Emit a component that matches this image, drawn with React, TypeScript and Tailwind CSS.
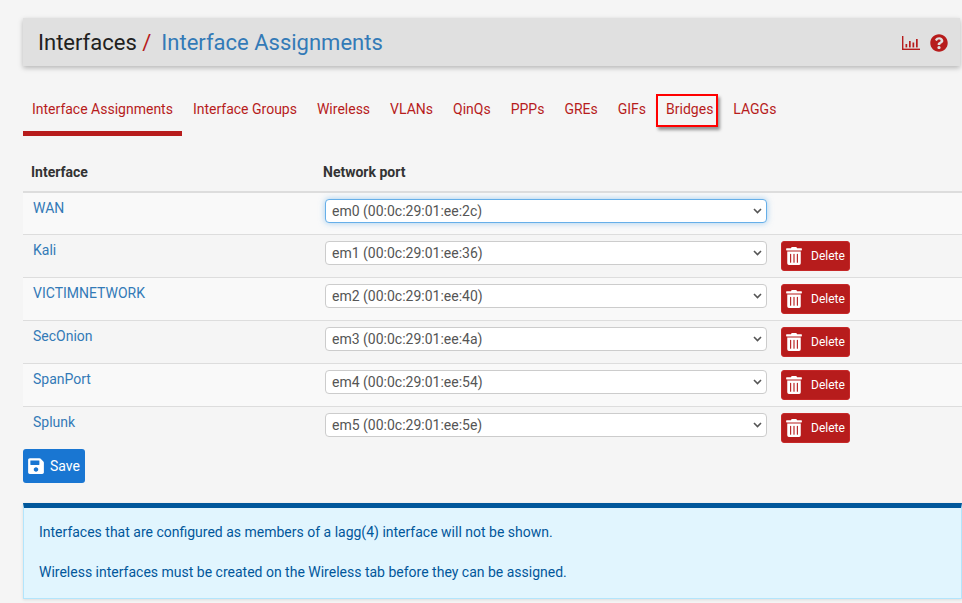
import { FaQuestionCircle, FaSave, FaTrashAlt } from "react-icons/fa"

const tabs = [
  "Interface Assignments",
  "Interface Groups",
  "Wireless",
  "VLANs",
  "QinQs",
  "PPPs",
  "GREs",
  "GIFs",
  "Bridges",
  "LAGGs",
]

const rows = [
  { name: "WAN", port: "em0 (00:0c:29:01:ee:2c)" },
  { name: "Kali", port: "em1 (00:0c:29:01:ee:36)" },
  { name: "VICTIMNETWORK", port: "em2 (00:0c:29:01:ee:40)" },
  { name: "SecOnion", port: "em3 (00:0c:29:01:ee:4a)" },
  { name: "SpanPort", port: "em4 (00:0c:29:01:ee:54)" },
  { name: "Splunk", port: "em5 (00:0c:29:01:ee:5e)" },
]

function ChartIcon() {
  return (
    <svg width="18" height="14" viewBox="0 0 18 14" fill="#b71c1c">
      <rect x="0" y="0" width="1.4" height="14" />
      <rect x="0" y="12.6" width="18" height="1.4" />
      <rect x="3.5" y="8" width="1.7" height="3.4" />
      <rect x="7" y="5" width="1.7" height="6.4" />
      <rect x="10.5" y="6.5" width="1.7" height="4.9" />
      <rect x="14" y="3" width="1.7" height="8.4" />
    </svg>
  )
}

export default function App() {
  return (
    <div className="h-[603px] w-[962px] overflow-hidden bg-[#f5f5f5] pl-[23px] pt-[18px] font-['Roboto',sans-serif] text-[14px] text-[#333]">
      <div className="flex h-[48px] w-[937px] items-center justify-between bg-[#e0e0e0] pl-[15px] pr-[12px] pt-[2px] shadow-[0_2px_5px_rgba(0,0,0,0.26)]">
        <h1 className="text-[22px] leading-none text-[#212121]">
          Interfaces <span className="text-[#b71c1c]">/</span>
          <span className="ml-[10px] text-[#337ab7]">Interface Assignments</span>
        </h1>
        <div className="flex items-center gap-[10px]">
          <ChartIcon />
          <FaQuestionCircle className="text-[18px] text-[#b71c1c]" />
        </div>
      </div>

      <ul className="mt-[24px] flex">
        {tabs.map((tab, i) => (
          <li
            key={tab}
            className={`relative h-[46px] pt-[9px] leading-[20px] text-[#b71c1c] ${i === 0 ? "mr-[1px] border-b-[5px] border-[#b71c1c] px-[9px]" : "px-[10px]"}`}
          >
            {tab}
            {tab === "Bridges" && (
              <span className="absolute left-0 top-[4px] h-[33px] w-[62px] border-[2px] border-[#ff0000] shadow-[2px_3px_3px_rgba(0,0,0,0.4)]" />
            )}
          </li>
        ))}
      </ul>

      <table className="mt-[16px] w-[939px] table-fixed border-collapse">
        <thead>
          <tr className="h-[40px] border-b-[2px] border-[#ddd] font-bold">
            <th className="w-[292px] pl-[8px] pt-[2px] text-left font-bold">Interface</th>
            <th className="pl-[8px] pt-[2px] text-left font-bold">Network port</th>
          </tr>
        </thead>
        <tbody>
          {rows.map((row, i) => (
            <tr
              key={row.name}
              className={`border-b border-[#ddd] last:border-b-0 ${i === 0 ? "h-[42px]" : "h-[43px]"} ${i % 2 === 0 ? "bg-[#f9f9f9]" : "bg-[#f5f5f5]"}`}
            >
              <td className="pb-[10px] pl-[10px] align-middle text-[#337ab7]">{row.name}</td>
              <td className="pl-[10px] align-top">
                <div className="flex items-start gap-[14px] pt-[6px]">
                  <div className="relative h-[24px] w-[442px]">
                    <select
                      defaultValue={row.port}
                      className={`h-[24px] w-full appearance-none rounded-[4px] border bg-white px-[6px] text-[14px] leading-[20px] text-[#555] ${i === 0 ? "border-[#66afe9] shadow-[0_0_6px_rgba(102,175,233,0.6)]" : "border-[#ccc]"}`}
                    >
                      <option>{row.port}</option>
                    </select>
                    <svg
                      className="pointer-events-none absolute right-[5px] top-[9px]"
                      width="9"
                      height="6"
                      viewBox="0 0 9 6"
                      fill="none"
                      stroke="#555"
                      strokeWidth="1.6"
                    >
                      <path d="M1 1l3.5 3.5L8 1" />
                    </svg>
                  </div>
                  {i > 0 && (
                    <button className="flex h-[30px] w-[69px] items-center gap-[8px] rounded-[3px] border border-[#c62828] bg-[#b71c1c] pl-[3px] text-[12px] text-white">
                      <FaTrashAlt className="text-[18px]" />
                      Delete
                    </button>
                  )}
                </div>
              </td>
            </tr>
          ))}
        </tbody>
      </table>

      <button className="flex h-[34px] w-[62px] items-center gap-[5px] rounded-[3px] bg-[#1976d2] pl-[4px] text-white">
        <FaSave className="text-[18px]" />
        Save
      </button>

      <div className="mt-[20px] h-[96px] w-[939px] border border-t-[5px] border-[#b3e5fc] border-t-[#01579b] bg-[#e1f5fe] pl-[15px] pt-[14px] leading-[20px] text-[#01579b] shadow-[0_1px_3px_rgba(0,0,0,0.1)]">
        <p>Interfaces that are configured as members of a lagg(4) interface will not be shown.</p>
        <p className="mt-[20px]">Wireless interfaces must be created on the Wireless tab before they can be assigned.</p>
      </div>
    </div>
  )
}
